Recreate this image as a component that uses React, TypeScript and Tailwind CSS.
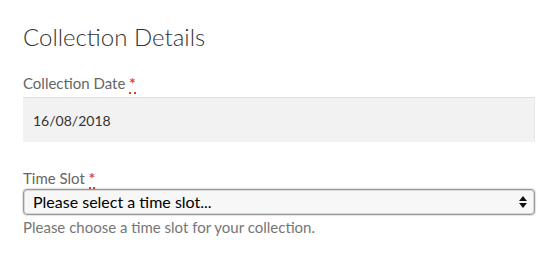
export default function App() {
  return (
    <div className="w-[558px] h-[263px] bg-white px-[23px] pt-[21px] font-['Lato','Liberation_Sans',sans-serif]">
      <h2 className="text-[24px] leading-[32px] font-light text-[#333]">Collection Details</h2>

      <div className="mt-[20px]">
        <label className="block text-[15px] leading-[20px] text-[#666]">
          Collection Date{" "}
          <abbr title="required" className="text-[#e2401c] no-underline border-b-2 border-dotted border-[#e2401c] font-bold">*</abbr>
        </label>
        <div className="mt-[4px] h-[45px] bg-[#f2f2f2] border-t border-[#dcdcdc] border-r border-r-[#e6e6e6] flex items-center px-[10px] text-[14px] text-[#333]">
          16/08/2018
        </div>
      </div>

      <div className="mt-[26px]">
        <label className="block text-[15px] leading-[20px] text-[#666]">
          Time Slot{" "}
          <abbr title="required" className="text-[#e2401c] no-underline border-b-2 border-dotted border-[#e2401c] font-bold">*</abbr>
        </label>
        <div className="relative mt-[1px]">
          <select className="w-full h-[26px] appearance-none rounded-[4px] border border-[#9a9a9a] bg-[#f7f7f7] shadow-[inset_0_0_0_1px_#d8d8d8,0_0_1px_1px_rgba(0,0,0,0.12)] pl-[9px] pr-[24px] text-[16px] text-black font-['Lato','Liberation_Sans',sans-serif]">
            <option>Please select a time slot...</option>
          </select>
          <svg className="absolute right-[8px] top-[7px] pointer-events-none" width="8" height="12" viewBox="0 0 8 12">
            <path d="M4 0 L8 5 H0 Z" fill="#111" />
            <path d="M0 7 H8 L4 12 Z" fill="#111" />
          </svg>
        </div>
        <p className="mt-[2px] text-[15px] leading-[20px] text-[#767676]">Please choose a time slot for your collection.</p>
      </div>
    </div>
  );
}
